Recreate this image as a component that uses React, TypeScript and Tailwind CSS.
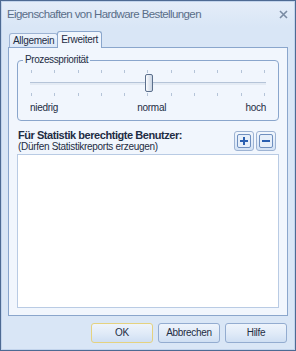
import React from "react";

const font = { fontFamily: '"Liberation Sans", Arial, sans-serif' };

function TickRow() {
    return (
        <div className="flex justify-between px-[1px]">
            {Array.from({ length: 11 }).map((_, i) => (
                <div key={i} className="w-px h-[3px] bg-[#b5c4d8]" />
            ))}
        </div>
    );
}

function SmallButton({ sign }: { sign: "+" | "-" }) {
    return (
        <div className="w-[20px] h-[20px] rounded-[3px] border border-[#9db3d3] bg-gradient-to-b from-[#f2f7fd] to-[#d3e2f5] flex items-center justify-center">
            <div className="w-[14px] h-[14px] rounded-[2px] border border-[#6f8fbf] bg-[#e6effa] flex items-center justify-center">
                {sign === "+" ? (
                    <svg width="8" height="8" viewBox="0 0 8 8">
                        <rect x="3" y="0" width="2" height="8" fill="#2a5fb0" />
                        <rect x="0" y="3" width="8" height="2" fill="#2a5fb0" />
                    </svg>
                ) : (
                    <svg width="8" height="8" viewBox="0 0 8 8">
                        <rect x="0" y="3" width="8" height="2" fill="#2a5fb0" />
                    </svg>
                )}
            </div>
        </div>
    );
}

function DialogButton({ label, focused = false }: { label: string; focused?: boolean }) {
    return (
        <div
            className={`w-[62px] h-[20px] rounded-[3px] border flex items-center justify-center text-[10px] tracking-[-0.3px] text-[#1e2d44] bg-gradient-to-b from-[#eef4fc] via-[#e1ebf8] to-[#cfdff3] ${
                focused ? "border-[#e5d27f]" : "border-[#93acd0]"
            }`}
        >
            {label}
        </div>
    );
}

export default function App() {
    return (
        <div className="w-[296px] h-[351px] bg-[#4d6a93] p-px" style={font}>
            <div className="w-full h-full bg-[#d9e6f6] flex flex-col border border-[#c2d4ec]">
                {/* Title bar */}
                <div className="h-[25px] flex items-center justify-between pl-[5px] pr-[6px] bg-gradient-to-b from-[#e4edf9] to-[#d9e6f6]">
                    <span className="text-[11.5px] tracking-[-0.6px] text-[#5a6e89]">Eigenschaften von Hardware Bestellungen</span>
                    <svg width="9" height="9" viewBox="0 0 9 9">
                        <path d="M1 1 L8 8 M8 1 L1 8" stroke="#7a8ba3" strokeWidth="1.6" />
                    </svg>
                </div>

                {/* Tabs */}
                <div className="px-[6px] flex flex-col flex-1">
                    <div className="flex items-end h-[20px] pl-[1px]">
                        <div className="h-[14px] px-[3px] border border-b-0 border-[#9db3d3] rounded-t-[3px] bg-gradient-to-b from-[#eef4fc] to-[#dbe7f7] text-[10px] tracking-[-0.3px] text-[#1e2d44] leading-[14px] -mr-px">
                            Allgemein
                        </div>
                        <div className="h-[17px] px-[3px] border border-b-0 border-[#8aa6cc] rounded-t-[3px] bg-[#f1f6fd] text-[10px] tracking-[-0.3px] text-[#1e2d44] leading-[15px] relative z-10 -mb-px">
                            Erweitert
                        </div>
                    </div>

                    {/* Panel */}
                    <div className="flex-1 border border-[#8aa6cc] bg-[#f1f6fd] px-[8px] pt-[12px] pb-[7px] flex flex-col">
                        {/* Group box */}
                        <div className="relative border border-[#8aa6cc] rounded-[4px] h-[61px] px-[12px] pt-[9px]">
                            <span className="absolute -top-[7px] left-[5px] px-[2px] bg-[#f1f6fd] text-[10px] tracking-[-0.4px] leading-[12px] text-[#1e2d44]">
                                Prozesspriorität
                            </span>
                            <TickRow />
                            <div className="relative h-[20px] flex items-center">
                                <div className="w-full h-[3px] border-t border-[#b5c4d8] bg-[#e4ebf4]" />
                                <div className="absolute left-[115px] top-[1px] w-[8px] h-[18px] rounded-[2px] border border-[#5b6f8c] bg-gradient-to-r from-[#fbfcfe] to-[#c9d4e3]" />
                            </div>
                            <TickRow />
                            <div className="flex justify-between mt-[6px] text-[10px] tracking-[-0.3px] text-[#1e2d44] leading-[12px]">
                                <span>niedrig</span>
                                <span>normal</span>
                                <span>hoch</span>
                            </div>
                        </div>

                        {/* Users */}
                        <div className="flex items-end justify-between mt-[8px] pl-[1px]">
                            <div className="text-[#1e2d44] leading-[12px]">
                                <div className="font-bold text-[11px] tracking-[-0.45px]">Für Statistik berechtigte Benutzer:</div>
                                <div className="text-[10px] tracking-[-0.3px]">(Dürfen Statistikreports erzeugen)</div>
                            </div>
                            <div className="flex gap-[2px] mb-[2px] mr-[3px]">
                                <SmallButton sign="+" />
                                <SmallButton sign="-" />
                            </div>
                        </div>
                        <div className="flex-1 mt-px bg-white border border-[#b9cbe4]" />
                    </div>

                    {/* Buttons */}
                    <div className="flex justify-end gap-[5px] h-[33px] items-center pr-px">
                        <DialogButton label="OK" focused />
                        <DialogButton label="Abbrechen" />
                        <DialogButton label="Hilfe" />
                    </div>
                </div>
            </div>
        </div>
    );
}
